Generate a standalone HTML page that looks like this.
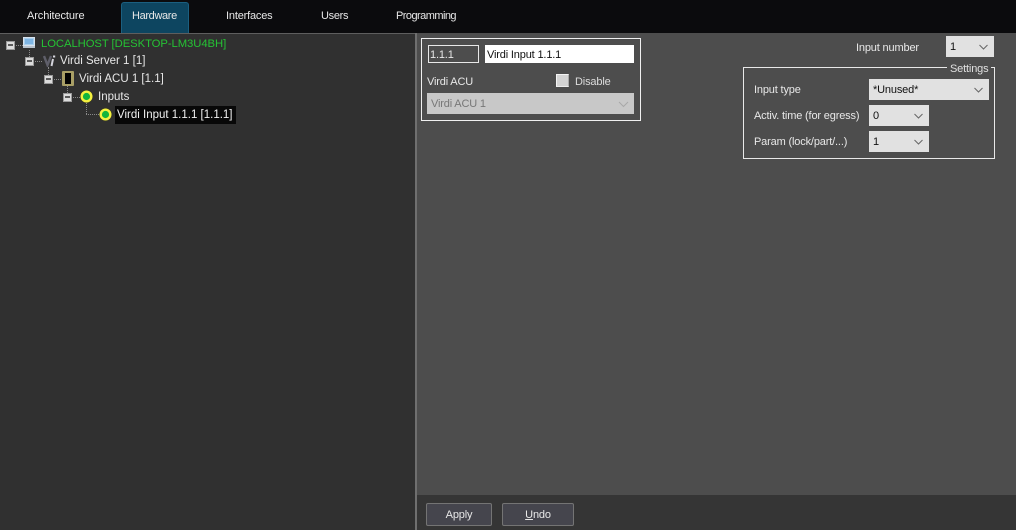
<!DOCTYPE html>
<html><head><meta charset="utf-8"><style>
html,body{margin:0;padding:0;width:1016px;height:530px;overflow:hidden;background:#4d4d4d}
body{position:relative;font-family:"Liberation Sans",sans-serif;font-size:11px;letter-spacing:-.16px;color:#e8e8e8}
.a{position:absolute;white-space:nowrap;line-height:14px}
.t{font-size:11.5px;letter-spacing:0}
.tab{font-size:11px}
.b{position:absolute;box-sizing:border-box}
.sel{position:absolute;box-sizing:border-box;background:#e1e1e1;color:#111;padding-left:4px;line-height:22px;height:21px;font-size:11px}
.sel svg{position:absolute;right:5px;top:8px}
.m{position:absolute;box-sizing:border-box;width:9px;height:9px;background:#dcdcdc;border:1px solid #9a9a9a}
.m:after{content:"";position:absolute;left:1px;top:2px;width:5px;height:2px;background:#5a5a5a}
.dv{position:absolute;border-left:1px dotted #8a8a8a}
.dh{position:absolute;border-top:1px dotted #8a8a8a}
</style></head><body>
<div class="b" style="left:0;top:0;width:1016px;height:33px;background:#0b0b0d"></div>
<div class="b" style="left:121px;top:2px;width:68px;height:31px;background:#0d4560;border:1px solid #1b5f80;border-bottom:0;border-radius:3px 3px 0 0"></div>
<div class="a tab" style="left:27px;top:9px;letter-spacing:-.1px">Architecture</div>
<div class="a tab" style="left:132px;top:9px;letter-spacing:-.35px">Hardware</div>
<div class="a tab" style="left:226px;top:9px;letter-spacing:-.18px">Interfaces</div>
<div class="a tab" style="left:321px;top:9px;letter-spacing:-.3px">Users</div>
<div class="a tab" style="left:396px;top:9px;letter-spacing:-.55px">Programming</div>

<div class="b" style="left:0;top:33px;width:415px;height:497px;background:#303030;border-top:1px solid #5e5e5e"></div>
<div class="b" style="left:415px;top:33px;width:2px;height:497px;background:#6f6f6f"></div>
<div class="b" style="left:417px;top:33px;width:599px;height:462px;background:#4d4d4d"></div>
<div class="b" style="left:417px;top:495px;width:599px;height:35px;background:#353535"></div>

<div class="dh" style="left:16px;top:45px;width:7px"></div>
<div class="dv" style="left:29px;top:50px;height:7px"></div>
<div class="dh" style="left:35px;top:61px;width:7px"></div>
<div class="dv" style="left:48px;top:67px;height:8px"></div>
<div class="dh" style="left:54px;top:79px;width:7px"></div>
<div class="dv" style="left:67px;top:85px;height:8px"></div>
<div class="dh" style="left:73px;top:97px;width:7px"></div>
<div class="dv" style="left:86px;top:102px;height:12px"></div>
<div class="dh" style="left:86px;top:114px;width:13px"></div>
<div class="m" style="left:6px;top:41px"></div>
<div class="m" style="left:25px;top:57px"></div>
<div class="m" style="left:44px;top:75px"></div>
<div class="m" style="left:63px;top:93px"></div>

<svg class="b" style="left:22px;top:37px" width="14" height="12" viewBox="0 0 14 12"><rect x="1.500" y=".5" width="11" height="8" fill="#a9d0ef" stroke="#d9e2ec"/><rect x="3" y="2" width="8" height="5" fill="#7fb5e3"/><rect x="1" y="9" width="12" height="2" fill="#b8c2cd"/></svg>
<svg class="b" style="left:43px;top:54px" width="14" height="13" viewBox="0 0 14 13"><path d="M1 2l3.500 9 3.500-9" fill="none" stroke="#5f5f6a" stroke-width="2.400"/><path d="M10 5l-1.500 7" stroke="#d4d4dc" stroke-width="2"/><rect x="10" y="1.500" width="2.200" height="2" fill="#d4d4dc"/></svg>
<svg class="b" style="left:62px;top:71px" width="12" height="15" viewBox="0 0 12 15"><rect x="0" y="0" width="12" height="15" rx="1" fill="#a99f66"/><rect x="3" y="2" width="6" height="11" fill="#030303"/></svg>
<svg class="b" style="left:80px;top:90px" width="13" height="13" viewBox="0 0 13 13"><circle cx="6.500" cy="6.500" r="6.500" fill="#3a3a20"/><circle cx="6.500" cy="6.500" r="6" fill="#f4f140"/><circle cx="6.500" cy="6.500" r="3.600" fill="#12b53c"/></svg>
<svg class="b" style="left:99px;top:108px" width="13" height="13" viewBox="0 0 13 13"><circle cx="6.500" cy="6.500" r="6.500" fill="#3a3a20"/><circle cx="6.500" cy="6.500" r="6" fill="#f4f140"/><circle cx="6.500" cy="6.500" r="3.600" fill="#12b53c"/></svg>

<div class="a" style="left:41px;top:37px;color:#25c234;font-size:11.3px;letter-spacing:-.08px">LOCALHOST [DESKTOP-LM3U4BH]</div>
<div class="a t" style="left:60px;top:54px">Virdi Server 1 [1]</div>
<div class="a t" style="left:79px;top:72px">Virdi ACU 1 [1.1]</div>
<div class="a t" style="left:98px;top:90px">Inputs</div>
<div class="b" style="left:115px;top:106px;width:121px;height:18px;background:#080808"></div>
<div class="a t" style="left:117px;top:108px;color:#f2f2f2">Virdi Input 1.1.1 [1.1.1]</div>

<div class="b" style="left:421px;top:38px;width:220px;height:83px;border:1px solid #f0f0f0"></div>
<div class="b" style="left:428px;top:45px;width:51px;height:18px;border:1px solid #e8e8e8"></div>
<div class="a" style="left:430px;top:48px;font-size:11px">1.1.1</div>
<div class="b" style="left:485px;top:45px;width:149px;height:18px;background:#fff"></div>
<div class="a" style="left:487px;top:48px;color:#111">Virdi Input 1.1.1</div>
<div class="a" style="left:427px;top:75px">Virdi ACU</div>
<div class="b" style="left:556px;top:74px;width:13px;height:13px;background:#d4d4d4;border:1px solid #f4f4f4;border-right-color:#aaa;border-bottom-color:#eee"></div>
<div class="a" style="left:575px;top:75px;color:#dcdcdc">Disable</div>
<div class="sel" style="left:427px;top:93px;width:207px;background:#c8c8c8;color:#777">Virdi ACU 1<svg width="11" height="7"><path d="M1 1l4.500 4.500L10 1" fill="none" stroke="#a8a8a8"/></svg></div>

<div class="a" style="left:856px;top:41px">Input number</div>
<div class="sel" style="left:946px;top:36px;width:48px">1<svg width="11" height="7"><path d="M1.500 1l4 4 4-4" fill="none" stroke="#666"/></svg></div>
<div class="b" style="left:743px;top:67px;width:252px;height:92px;border:1px solid #e8e8e8"></div>
<div class="a" style="left:947px;top:62px;background:#4d4d4d;padding:0 3px;color:#e0e0e0">Settings</div>
<div class="a" style="left:754px;top:83px">Input type</div>
<div class="a" style="left:754px;top:109px">Activ. time (for egress)</div>
<div class="a" style="left:754px;top:135px">Param (lock/part/...)</div>
<div class="sel" style="left:869px;top:79px;width:120px">*Unused*<svg width="11" height="7"><path d="M1.500 1l4 4 4-4" fill="none" stroke="#666"/></svg></div>
<div class="sel" style="left:869px;top:105px;width:60px">0<svg width="11" height="7"><path d="M1.500 1l4 4 4-4" fill="none" stroke="#666"/></svg></div>
<div class="sel" style="left:869px;top:131px;width:60px">1<svg width="11" height="7"><path d="M1.500 1l4 4 4-4" fill="none" stroke="#666"/></svg></div>

<div class="b" style="left:426px;top:503px;width:66px;height:23px;background:#45454d;border:1px solid #747474;border-radius:2px;text-align:center;line-height:22px;font-size:11px">Apply</div>
<div class="b" style="left:502px;top:503px;width:72px;height:23px;background:#45454d;border:1px solid #747474;border-radius:2px;text-align:center;line-height:22px;font-size:11px"><u>U</u>ndo</div>
</body></html>
